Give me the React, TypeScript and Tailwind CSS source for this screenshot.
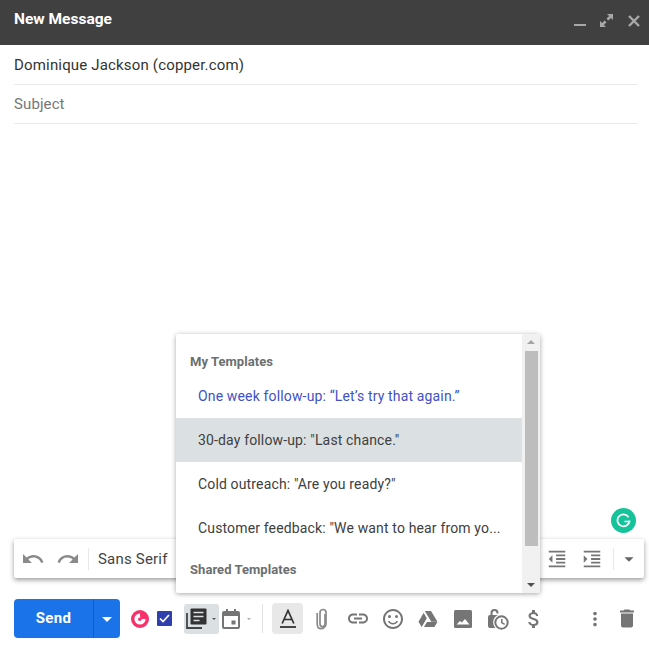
import {
  MdArrowDropDown,
  MdAttachMoney,
  MdDelete,
  MdFormatIndentDecrease,
  MdFormatIndentIncrease,
  MdLink,
  MdMoreVert,
  MdOutlineSentimentSatisfiedAlt,
  MdRedo,
  MdUndo,
} from "react-icons/md";

const ITEMS = [
  { label: "One week follow-up: “Let’s try that again.”", cls: "text-[#3f51c4]" },
  { label: '30-day follow-up: "Last chance."', cls: "text-[#404040] bg-[#dbe0e2]" },
  { label: 'Cold outreach: "Are you ready?"', cls: "text-[#404040]" },
  { label: 'Customer feedback: "We want to hear from yo...', cls: "text-[#404040]" },
];

function DriveIcon() {
  return (
    <svg width="20" height="18" viewBox="0 0 20 18" fill="#757575">
      <path d="M6.800 1h6.200l6.500 10.800h-6.200z" />
      <path d="M5.700 2.800 8.800 8.200 3.700 17 .5 11.700z" />
      <path d="M6 17l3-5h10.400L16.400 17z" />
    </svg>
  );
}

function ImageIcon() {
  return (
    <svg width="20" height="20" viewBox="0 0 20 20">
      <rect x="1" y="1" width="18" height="18" rx="1.500" fill="#757575" />
      <path d="M3.500 15.500 7 12l1.800 1.500L12 10l4.500 5.500z" fill="#fff" />
    </svg>
  );
}

function LockClock() {
  return (
    <svg width="22" height="24" viewBox="0 0 22 24" fill="#757575">
      <path d="M3.500 8V6a4 4 0 0 1 8 0v.5h-2V6a2 2 0 0 0-4 0v2H11a8 8 0 0 0-2.500 13H3a2 2 0 0 1-2-2V10a2 2 0 0 1 2-2z" />
      <circle cx="14.500" cy="15.500" r="6.200" fill="none" stroke="#757575" strokeWidth="2" />
      <path d="M14 12h1.500v3.200l2.500 1.500-.7 1.200-3.300-2z" />
    </svg>
  );
}

function CopperLogo() {
  return (
    <svg width="18" height="18" viewBox="0 0 18 18">
      <circle cx="9" cy="9" r="9" fill="#f8316b" />
      <path d="M9 3.400A5.600 5.600 0 1 0 14.600 9H11.800A2.800 2.800 0 0 1 9 6.200z" fill="#fff" />
      <circle cx="8.800" cy="9.300" r="1.800" fill="#f8316b" />
    </svg>
  );
}

function TemplatesIcon() {
  return (
    <svg width="21" height="21" viewBox="0 0 21 21">
      <path d="M1 5v15h15" fill="none" stroke="#444" strokeWidth="1.800" />
      <rect x="4.500" y="0.500" width="16" height="16" rx="1" fill="#333" />
      <path d="M7.500 4.500h10M7.500 8.500h10M7.500 12.500h6" stroke="#dbe0e2" strokeWidth="1.600" />
    </svg>
  );
}

function CalendarIcon() {
  return (
    <svg width="18" height="20" viewBox="0 0 18 20">
      <path d="M4 0h2v2h6V0h2v2h2a2 2 0 0 1 2 2v14a2 2 0 0 1-2 2H2a2 2 0 0 1-2-2V4a2 2 0 0 1 2-2h2z" fill="#757575" />
      <rect x="2" y="7" width="14" height="11" fill="#fff" />
      <rect x="9.500" y="11.500" width="4" height="4" fill="#757575" />
    </svg>
  );
}

function TextColorIcon() {
  return (
    <svg width="18" height="20" viewBox="0 0 18 20" fill="none" stroke="#333">
      <path d="M3.200 14.500 9 1.500l5.800 13M5 10.500h8" strokeWidth="1.700" />
      <path d="M1 18h16" strokeWidth="1.800" />
    </svg>
  );
}

function ClipIcon() {
  return (
    <svg width="14" height="22" viewBox="0 0 14 22" fill="none" stroke="#8a8a8a" strokeWidth="1.700">
      <path d="M9.500 6v10a2.500 2.500 0 0 1-5 0V4.500a3 3 0 0 1 6 0V16a5 5 0 0 1-8 3.500" transform="translate(0.500 0)" />
      <path d="M2.200 5v11c0 2 .5 3 1 3.600" />
    </svg>
  );
}

function Expand() {
  return (
    <svg width="13" height="13" viewBox="0 0 13 13" fill="#a8a8a8">
      <path d="M7 0h6v6l-2.100-2.100-2.600 2.600-1.800-1.800L9.100 2.100z" />
      <path d="M0 7v6h6l-2.100-2.100 2.600-2.600-1.800-1.800-2.600 2.600z" />
    </svg>
  );
}

function CloseIcon() {
  return (
    <svg width="12" height="12" viewBox="0 0 12 12" stroke="#a8a8a8" strokeWidth="2.400">
      <path d="M1 1l10 10M11 1 1 11" />
    </svg>
  );
}

export default function App() {
  return (
    <div className="relative flex h-[650px] w-[649px] flex-col overflow-hidden bg-white font-['Roboto',sans-serif]">
      <div className="flex h-[45px] items-center justify-between bg-[#404040] pb-[5px] pl-[14px] pr-[9px]">
        <span className="text-[15.500px] font-bold text-white">New Message</span>
        <div className="flex items-center pt-[1px]">
          <span className="mt-[9px] h-[2px] w-[12px] bg-[#a8a8a8]" />
          <span className="ml-[14px]">
            <Expand />
          </span>
          <span className="ml-[15px]">
            <CloseIcon />
          </span>
        </div>
      </div>

      <div className="ml-[14px] mr-[11px] flex h-[40px] items-center border-b border-[#e8eaed] pt-[1px] text-[15px] tracking-[0.17px] text-[#333]">
        Dominique Jackson (copper.com)
      </div>
      <div className="ml-[14px] mr-[11px] flex h-[39px] items-center border-b border-[#e8eaed] text-[15px] tracking-[0.1px] text-[#777]">
        Subject
      </div>
      <div className="flex-1" />

      <div className="flex h-[51px] items-center pb-[12px] pl-[14px]">
        <div className="flex h-[39px] w-[106px] overflow-hidden rounded-[4px] bg-[#1a73e8] text-white">
          <div className="flex w-[79px] items-center justify-center text-[15px] font-bold tracking-[0.3px]">Send</div>
          <div className="flex w-[27px] items-center justify-center border-l border-[#155fc2]">
            <MdArrowDropDown size={24} />
          </div>
        </div>
        <div className="ml-[11px]">
          <CopperLogo />
        </div>
        <div className="ml-[8px] flex h-[15px] w-[15px] items-center justify-center rounded-[1px] bg-[#2f3fae]">
          <svg width="11" height="9" viewBox="0 0 11 9" fill="none" stroke="#fff" strokeWidth="1.700">
            <path d="M1 4.500 4 7.500 10 1" />
          </svg>
        </div>
        <div className="ml-[12px] flex h-[30px] w-[35px] items-center rounded-[3px] bg-[#dbe0e2] pl-[2px]">
          <TemplatesIcon />
          <span className="ml-[5px] h-0 w-0 border-x-[2px] border-t-[2px] border-x-transparent border-t-[#555]" />
        </div>
        <div className="ml-[3px] flex w-[36px] items-center">
          <CalendarIcon />
          <span className="ml-[7px] h-0 w-0 border-x-[2px] border-t-[2px] border-x-transparent border-t-[#aaa]" />
        </div>
        <span className="ml-[4px] h-[29px] w-px bg-[#dfe3e5]" />
        <div className="ml-[9px] flex h-[31px] w-[31px] items-center justify-center rounded-[4px] bg-[#e8e8e8]">
          <TextColorIcon />
        </div>
        <div className="ml-[7px] flex w-[24px] justify-center">
          <ClipIcon />
        </div>
        <div className="ml-[12px] flex w-[24px] justify-center">
          <MdLink size={25} color="#757575" />
        </div>
        <div className="ml-[11px] flex w-[24px] justify-center">
          <MdOutlineSentimentSatisfiedAlt size={24} color="#757575" />
        </div>
        <div className="ml-[11px] flex w-[24px] justify-center">
          <DriveIcon />
        </div>
        <div className="ml-[11px] flex w-[24px] justify-center">
          <ImageIcon />
        </div>
        <div className="ml-[11px] flex w-[24px] justify-center">
          <LockClock />
        </div>
        <div className="ml-[12px] flex w-[24px] justify-center">
          <MdAttachMoney size={24} color="#757575" />
        </div>
        <div className="ml-[37px] flex w-[24px] justify-center">
          <MdMoreVert size={22} color="#757575" />
        </div>
        <div className="ml-[8px] flex w-[24px] justify-center">
          <MdDelete size={25} color="#757575" />
        </div>
      </div>

      {/* formatting bar floats over the message body */}
      <div className="absolute left-[14px] top-[539px] flex h-[39px] w-[630px] items-center rounded-[2px] bg-white shadow-[0_2px_5px_rgba(0,0,0,0.4)]">
        <MdUndo size={24} color="#8a8a8a" className="ml-[7px]" />
        <MdRedo size={24} color="#8a8a8a" className="ml-[11px]" />
        <span className="ml-[8px] h-[22px] w-px bg-[#e8e8e8]" />
        <span className="ml-[9px] pt-[2px] text-[15px] tracking-[0.2px] text-[#444]">Sans Serif</span>
        <div className="ml-auto flex items-center pr-[4px]">
          <MdFormatIndentDecrease size={22} color="#757575" />
          <MdFormatIndentIncrease size={22} color="#757575" className="ml-[13px]" />
          <span className="ml-[10px] h-[22px] w-px bg-[#e8e8e8]" />
          <MdArrowDropDown size={22} color="#666" className="ml-[4px]" />
        </div>
      </div>

      <div className="absolute left-[611px] top-[508px] flex h-[25px] w-[25px] items-center justify-center rounded-full bg-[#15c39a]">
        <svg width="15" height="15" viewBox="0 0 15 15" fill="none" stroke="#fff" strokeWidth="1.700">
          <path d="M12.600 4.200A6 6 0 1 0 13.500 7.500v1H8.500" />
        </svg>
      </div>

      {/* templates dropdown */}
      <div className="absolute left-[176px] top-[334px] flex h-[259px] w-[364px] overflow-hidden rounded-[2px] bg-white shadow-[0_1px_5px_rgba(0,0,0,0.35)]">
        <div className="w-[346px]">
          <div className="flex h-[40px] items-end pb-[2px] pl-[14px] text-[13px] font-bold leading-[20px] tracking-[0.05px] text-[#6b6f70]">
            My Templates
          </div>
          <div>
            {ITEMS.map((item) => (
              <div key={item.label} className={`flex h-[44px] items-center whitespace-nowrap pl-[22px] text-[14px] tracking-[0.15px] ${item.cls}`}>
                {item.label}
              </div>
            ))}
          </div>
          <div className="pl-[14px] pt-[10px] text-[13px] font-bold leading-[20px] tracking-[0.05px] text-[#6b6f70]">Shared Templates</div>
        </div>
        <div className="flex w-[18px] flex-col items-center bg-[#f1f1f1]">
          <span className="mt-[6px] h-0 w-0 border-x-[4px] border-b-[4px] border-x-transparent border-b-[#a3a3a3]" />
          <span className="mt-[7px] h-[195px] w-[13px] bg-[#bdbdbd]" />
          <span className="mt-auto mb-[6px] h-0 w-0 border-x-[4px] border-t-[4px] border-x-transparent border-t-[#505050]" />
        </div>
      </div>
    </div>
  );
}
